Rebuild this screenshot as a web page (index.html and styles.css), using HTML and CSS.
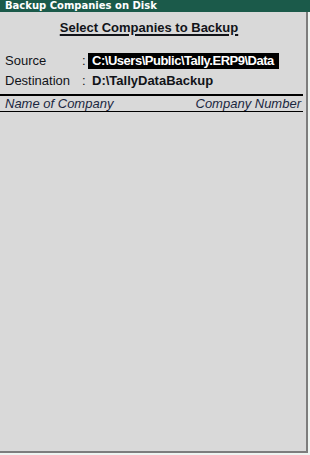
FILE: index.html
```html
<!DOCTYPE html>
<html>
<head>
<meta charset="utf-8">
<link rel="stylesheet" href="styles.css">
</head>
<body>
<div class="titlebar">Backup Companies on Disk</div>
<div class="panel">
  <div class="heading"><span class="heading-text">Select Companies to Backup</span></div>
  <div class="fields">
    <div class="field">
      <span class="label">Source</span>
      <span class="colon">:</span>
      <span class="value value-selected">C:\Users\Public\Tally.ERP9\Data</span>
    </div>
    <div class="field">
      <span class="label">Destination</span>
      <span class="colon">:</span>
      <span class="value">D:\TallyDataBackup</span>
    </div>
  </div>
  <div class="list-header">
    <span class="col">Name of Company</span>
    <span class="col">Company Number</span>
  </div>
</div>
</body>
</html>
```
FILE: styles.css
```css
html, body {
  margin: 0;
  padding: 0;
}
body {
  width: 310px;
  height: 455px;
  background: #eef4f1;
  font-family: "Liberation Sans", Arial, sans-serif;
  color: #111318;
  overflow: hidden;
}
.titlebar {
  height: 12px;
  line-height: 12px;
  background: #1b5a4a;
  color: #ffffff;
  font-family: "DejaVu Sans", Tahoma, sans-serif;
  font-weight: bold;
  font-size: 10px;
  padding-left: 5px;
  white-space: nowrap;
}
.panel {
  width: 306px;
  height: 431px;
  background: #d9d9d9;
  border-right: 2px solid #7d7d7d;
  border-bottom: 2px solid #7d7d7d;
  padding-top: 8px;
  box-sizing: content-box;
  display: flex;
  flex-direction: column;
}
.heading {
  height: 16px;
  line-height: 16px;
  text-align: center;
  font-size: 13px;
  font-weight: bold;
  padding-right: 8px;
}
.heading-text {
  text-decoration: underline;
  text-decoration-thickness: 2px;
  text-underline-offset: 2px;
}
.fields {
  margin-top: 17px;
  display: flex;
  flex-direction: column;
  gap: 4px;
}
.field {
  display: flex;
  height: 16px;
  line-height: 16px;
  font-size: 13px;
}
.label {
  width: 77px;
  padding-left: 5px;
}
.colon {
  width: 6px;
}
.value {
  font-weight: bold;
  padding-left: 4px;
}
.value-selected {
  background: #000;
  color: #fff;
  letter-spacing: -0.48px;
  width: 187px;
  white-space: nowrap;
  overflow: hidden;
}
.list-header {
  margin-top: 5px;
  width: 303px;
  height: 18px;
  box-sizing: border-box;
  display: flex;
  justify-content: space-between;
  border-top: 2px solid #000;
  border-bottom: 1px solid #000;
  line-height: 15px;
  font-size: 13px;
  font-style: italic;
  color: #1a2740;
  padding: 0 2px 0 5px;
}
```
